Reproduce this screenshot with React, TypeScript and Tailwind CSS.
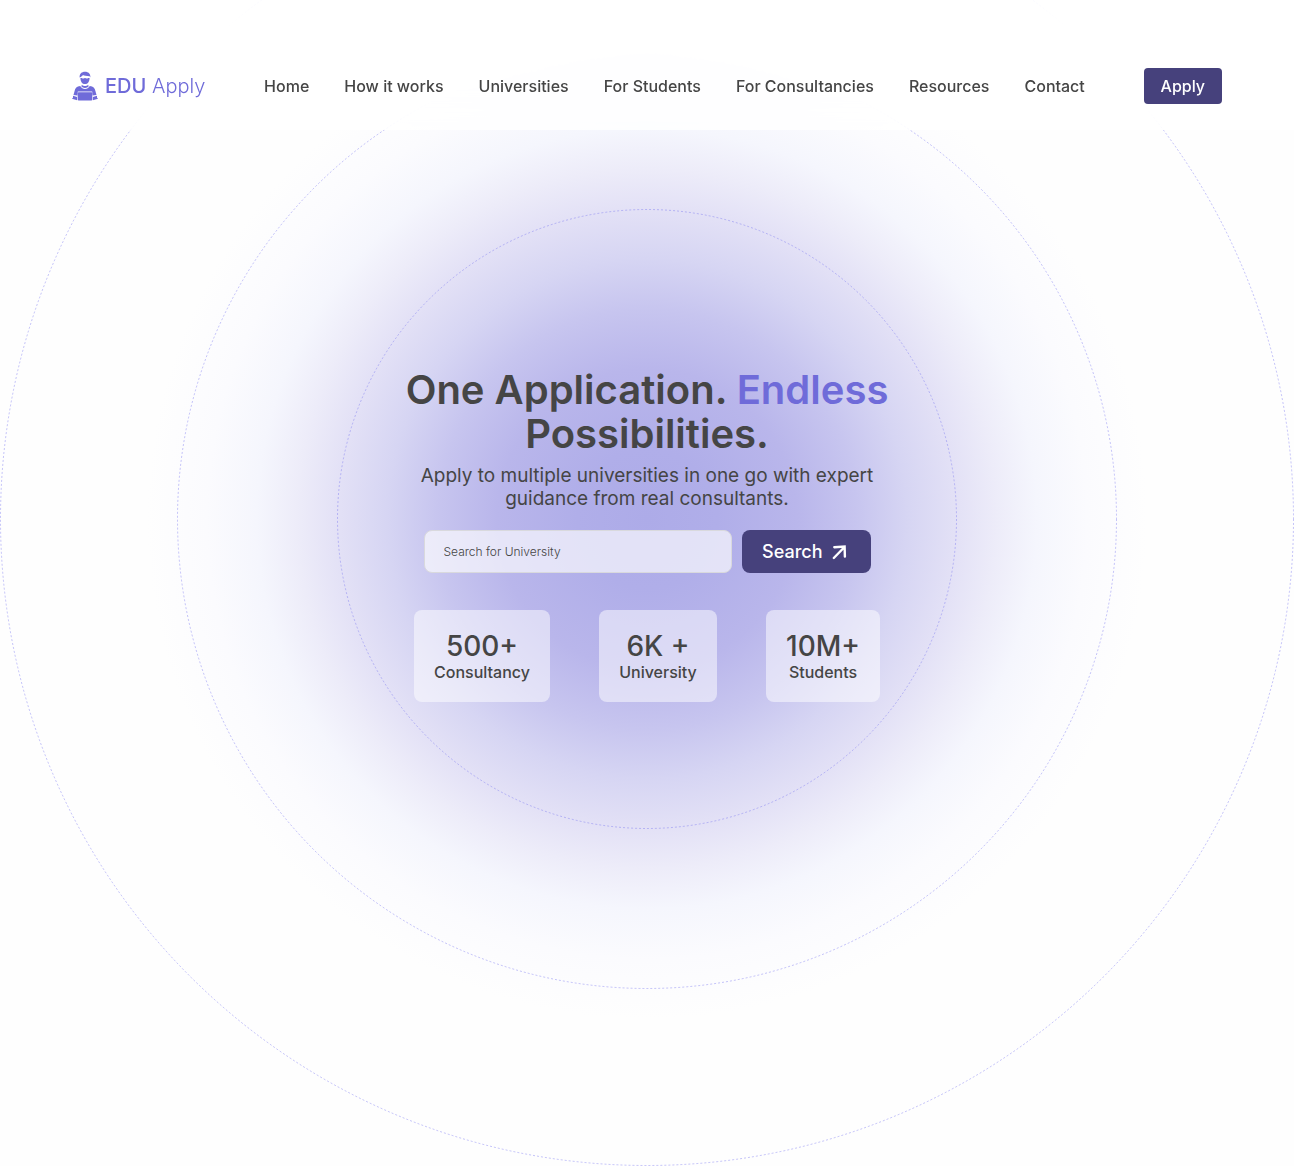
const navItems = [
  "Home",
  "How it works",
  "Universities",
  "For Students",
  "For Consultancies",
  "Resources",
  "Contact",
];

const stats = [
  { value: "500+", label: "Consultancy" },
  { value: "6K +", label: "University" },
  { value: "10M+", label: "Students" },
];

function Backdrop() {
  return (
    <svg
      aria-hidden="true"
      viewBox="0 0 1294 1294"
      className="pointer-events-none absolute inset-x-0 bottom-0 w-full"
    >
      <defs>
        <radialGradient id="glow" gradientUnits="userSpaceOnUse" cx="647" cy="647" r="500">
          <stop offset="0" stopColor="#adabe8" />
          <stop offset="0.14" stopColor="#b0aee9" />
          <stop offset="0.3" stopColor="#b9b6eb" />
          <stop offset="0.42" stopColor="#c7c5ef" />
          <stop offset="0.52" stopColor="#d6d5f3" />
          <stop offset="0.62" stopColor="#e3e1f6" />
          <stop offset="0.7" stopColor="#edecf9" />
          <stop offset="0.78" stopColor="#f5f6fd" />
          <stop offset="0.88" stopColor="#fbfbfe" />
          <stop offset="1" stopColor="#fefefe" />
        </radialGradient>
      </defs>
      <circle cx="647" cy="647" r="500" fill="url(#glow)" />
      <g fill="none" stroke="#6f6bf0" strokeOpacity="0.4" strokeDasharray="2 2">
        <circle cx="647" cy="647" r="309.5" />
        <circle cx="647" cy="647" r="469.5" />
        <circle cx="647" cy="647" r="646.5" />
      </g>
    </svg>
  );
}

function StudentIcon() {
  return (
    <svg aria-hidden="true" viewBox="0 0 26 30" className="h-[30px] w-[26px]" fill="#6f6bd9">
      <path d="M7.6 6.6C7.4 2.8 9.6.7 13 .7s5.600 2.100 5.400 5.900L17.600 5.200C14.500 5.200 12.300 4.700 10.900 4.100 10.400 5.100 9.300 5.800 7.600 6.600Z" />
      <path d="M8.400 6.900h1.300c1.200.9 2.400.7 3.300.2 1 .5 2.200.6 3.300-.2h1.300c-.1 3.700-1.800 6.200-4.600 6.200s-4.500-2.500-4.600-6.200Z" />
      <path d="M9.900 13.700c1 1 2 1.400 3.100 1.400s2.100-.4 3.100-1.400l.6 1.500c-1 1.100-2.200 1.700-3.700 1.700s-2.700-.6-3.700-1.700Z" />
      <path d="M8.200 14.900c1.200 2 2.800 3 4.800 3s3.600-1 4.800-3c3.500.5 5 2 5.600 5l1.100 4.100-4 .5-.3-4.100H5.800l-.3 4.100-4-.5 1.100-4.100c.6-3 2.100-4.500 5.600-5Z" />
      <rect x="5.700" y="21.200" width="14.600" height="8.200" rx="1" />
      <path d="m1 24.800 4.100 1.100v3.300l-4.300-1.100c-1-.3-.8-1.100.2-1.300Zm24 0-4.100 1.100v3.300l4.300-1.100c1-.3.800-1.100-.2-1.300Z" />
    </svg>
  );
}

function Header() {
  return (
    <header className="relative z-10 flex items-center justify-between bg-white/80 px-[72px] pt-[68px] pb-[26px] backdrop-blur-lg">
      <a href="#" className="flex items-center gap-[7px] text-xl text-[#6f6bd9]">
        <StudentIcon />
        <span className="font-light whitespace-nowrap">
          <span className="font-medium">EDU</span> Apply
        </span>
      </a>
      <nav aria-label="Main" className="flex gap-[35px] text-base font-medium whitespace-nowrap">
        {navItems.map((item) => (
          <a key={item} href="#">
            {item}
          </a>
        ))}
      </nav>
      <button
        type="button"
        className="h-9 rounded bg-[#46417c] px-[17px] text-base font-medium text-white"
      >
        Apply
      </button>
    </header>
  );
}

function SearchForm() {
  return (
    <form className="mt-5 flex w-full max-w-[447px] gap-[10px]" onSubmit={(e) => e.preventDefault()}>
      <input
        type="search"
        aria-label="Search for University"
        placeholder="Search for University"
        className="h-[43px] min-w-0 flex-1 rounded-lg border border-[#d9d9dd] bg-white/65 px-[19px] text-xs font-light placeholder:text-[#454545]"
      />
      <button
        type="submit"
        className="flex h-[43px] items-center gap-2 rounded-lg bg-[#46417c] pr-6 pl-5 text-lg font-medium text-white"
      >
        Search
        <svg
          aria-hidden="true"
          viewBox="0 0 16 16"
          className="size-4"
          fill="none"
          stroke="currentColor"
          strokeWidth="2.4"
          strokeLinecap="round"
          strokeLinejoin="miter"
        >
          <path d="M2.800 14 13.500 3M3.300 3.200 13.600 2.600 13.900 12.600" />
        </svg>
      </button>
    </form>
  );
}

export default function App() {
  return (
    <div className="relative min-h-screen overflow-hidden bg-[#fefefe] font-['Inter',sans-serif] text-[#454545]">
      <Backdrop />
      <Header />
      <main className="relative flex flex-col items-center px-6 pt-[238px] pb-16">
        <h1 className="max-w-[520px] text-center text-[40px] leading-[44px] font-semibold">
          One Application. <span className="text-[#6f6bd9]">Endless</span> Possibilities.
        </h1>
        <p className="mt-2 max-w-[490px] text-center text-[19px] leading-[23px]">
          Apply to multiple universities in one go with expert guidance from real consultants.
        </p>
        <SearchForm />
        <dl className="mt-[37px] flex w-full max-w-[466px] justify-between">
          {stats.map(({ value, label }) => (
            <div
              key={label}
              className="flex flex-col-reverse rounded-lg bg-white/50 p-5 text-center font-medium"
            >
              <dt className="text-base leading-5">{label}</dt>
              <dd className="text-[28px] leading-8">{value}</dd>
            </div>
          ))}
        </dl>
      </main>
    </div>
  );
}
